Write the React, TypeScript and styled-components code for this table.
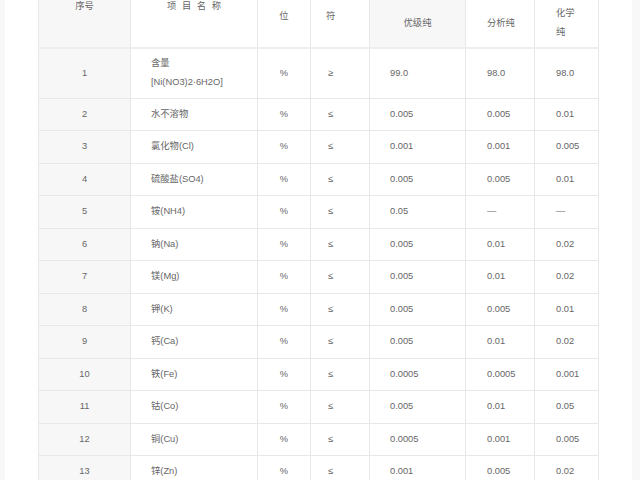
import * as React from "react";
import styled, { createGlobalStyle } from "styled-components";

type Row = {
  no: string;
  name: React.ReactNode;
  sign: string;
  gr: string;
  ar: string;
  cp: string;
};

const rows: Row[] = [
  {
    no: "1",
    name: (
      <>
        含量
        <br />
        [Ni(NO3)2·6H2O]
      </>
    ),
    sign: "≥",
    gr: "99.0",
    ar: "98.0",
    cp: "98.0",
  },
  { no: "2", name: "水不溶物", sign: "≤", gr: "0.005", ar: "0.005", cp: "0.01" },
  { no: "3", name: "氯化物(Cl)", sign: "≤", gr: "0.001", ar: "0.001", cp: "0.005" },
  { no: "4", name: "硫酸盐(SO4)", sign: "≤", gr: "0.005", ar: "0.005", cp: "0.01" },
  { no: "5", name: "铵(NH4)", sign: "≤", gr: "0.05", ar: "—", cp: "—" },
  { no: "6", name: "钠(Na)", sign: "≤", gr: "0.005", ar: "0.01", cp: "0.02" },
  { no: "7", name: "镁(Mg)", sign: "≤", gr: "0.005", ar: "0.01", cp: "0.02" },
  { no: "8", name: "钾(K)", sign: "≤", gr: "0.005", ar: "0.005", cp: "0.01" },
  { no: "9", name: "钙(Ca)", sign: "≤", gr: "0.005", ar: "0.01", cp: "0.02" },
  { no: "10", name: "铁(Fe)", sign: "≤", gr: "0.0005", ar: "0.0005", cp: "0.001" },
  { no: "11", name: "钴(Co)", sign: "≤", gr: "0.005", ar: "0.01", cp: "0.05" },
  { no: "12", name: "铜(Cu)", sign: "≤", gr: "0.0005", ar: "0.001", cp: "0.005" },
  { no: "13", name: "锌(Zn)", sign: "≤", gr: "0.001", ar: "0.005", cp: "0.02" },
];

const widths = [92, 127, 53, 59, 96, 69, 64];

const App: React.FC = () => {
  return (
    <>
      <GlobalStyle />
      <Sheet>
        <SpecTable>
          <colgroup>
            {widths.map((w, i) => (
              <col key={i} style={{ width: w }} />
            ))}
          </colgroup>
          <thead>
            <tr>
              <HeadCell $shade $top={2}>序号</HeadCell>
              <HeadCell $top={2}>
                <Spaced>项目名称</Spaced>
              </HeadCell>
              <HeadCell $top={11.5}>位</HeadCell>
              <HeadCell $top={11.5} $align="left" $pad={15}>
                符
              </HeadCell>
              <HeadCell $shade $top={18.5}>优级纯</HeadCell>
              <HeadCell $top={18.5} $align="left" $pad={21}>
                分析纯
              </HeadCell>
              <HeadCell $top={8.5} $align="left" $pad={21}>
                化学
                <br />
                纯
              </HeadCell>
            </tr>
          </thead>
          <tbody>
            {rows.map((r, i) => {
              const pv = i === 0 ? 5.5 : 6.25;
              return (
                <tr key={r.no}>
                  <Cell $shade $pv={pv}>{r.no}</Cell>
                  <Cell $align="left" $pv={pv}>{r.name}</Cell>
                  <Cell $pv={pv}>%</Cell>
                  <Cell $align="left" $pad={17} $pv={pv}>
                    {r.sign}
                  </Cell>
                  <Cell $align="left" $pv={pv}>{r.gr}</Cell>
                  <Cell $align="left" $pad={21} $pv={pv}>
                    {r.ar}
                  </Cell>
                  <Cell $align="left" $pad={21} $pv={pv}>
                    {r.cp}
                  </Cell>
                </tr>
              );
            })}
          </tbody>
        </SpecTable>
      </Sheet>
    </>
  );
};

const GlobalStyle = createGlobalStyle`
  html, body {
    margin: 0;
    padding: 0;
    background: #f8f8f8;
    overflow: hidden;
  }
`;

const Sheet = styled.div`
  margin: 0 8px 0 5px;
  min-height: 480px;
  background: #fff;
  padding-left: 33px;
  overflow: hidden;
  font-family: "Liberation Sans", "Noto Sans CJK SC", sans-serif;
  font-size: 9.3px;
  color: #666;
`;

const SpecTable = styled.table`
  border-collapse: collapse;
  table-layout: fixed;
  width: 561px;
  margin-top: -6px;
`;

type CellProps = {
  $shade?: boolean;
  $align?: "left" | "center";
  $pad?: number;
};

const HeadCell = styled.th<CellProps & { $top: number }>`
  height: 53px;
  box-sizing: border-box;
  vertical-align: top;
  font-weight: normal;
  line-height: 19px;
  text-align: ${p => p.$align || "center"};
  padding: ${p => p.$top}px 0 0 ${p => (p.$align === "left" ? p.$pad ?? 20 : 0)}px;
  background: ${p => (p.$shade ? "#f7f7f7" : "#fff")};
  border: 1px solid #e8e8e8;
  border-bottom: 2px solid #eee;
`;

const Spaced = styled.span`
  letter-spacing: 5.6px;
  margin-right: -5.6px;
`;

const Cell = styled.td<CellProps & { $pv: number }>`
  line-height: 19px;
  padding: ${p => p.$pv}px 0 ${p => p.$pv}px
    ${p => (p.$align === "left" ? p.$pad ?? 20 : 0)}px;
  text-align: ${p => p.$align || "center"};
  vertical-align: middle;
  background: ${p => (p.$shade ? "#f7f7f7" : "#fff")};
  border: 1px solid #e8e8e8;
`;

export default App;
